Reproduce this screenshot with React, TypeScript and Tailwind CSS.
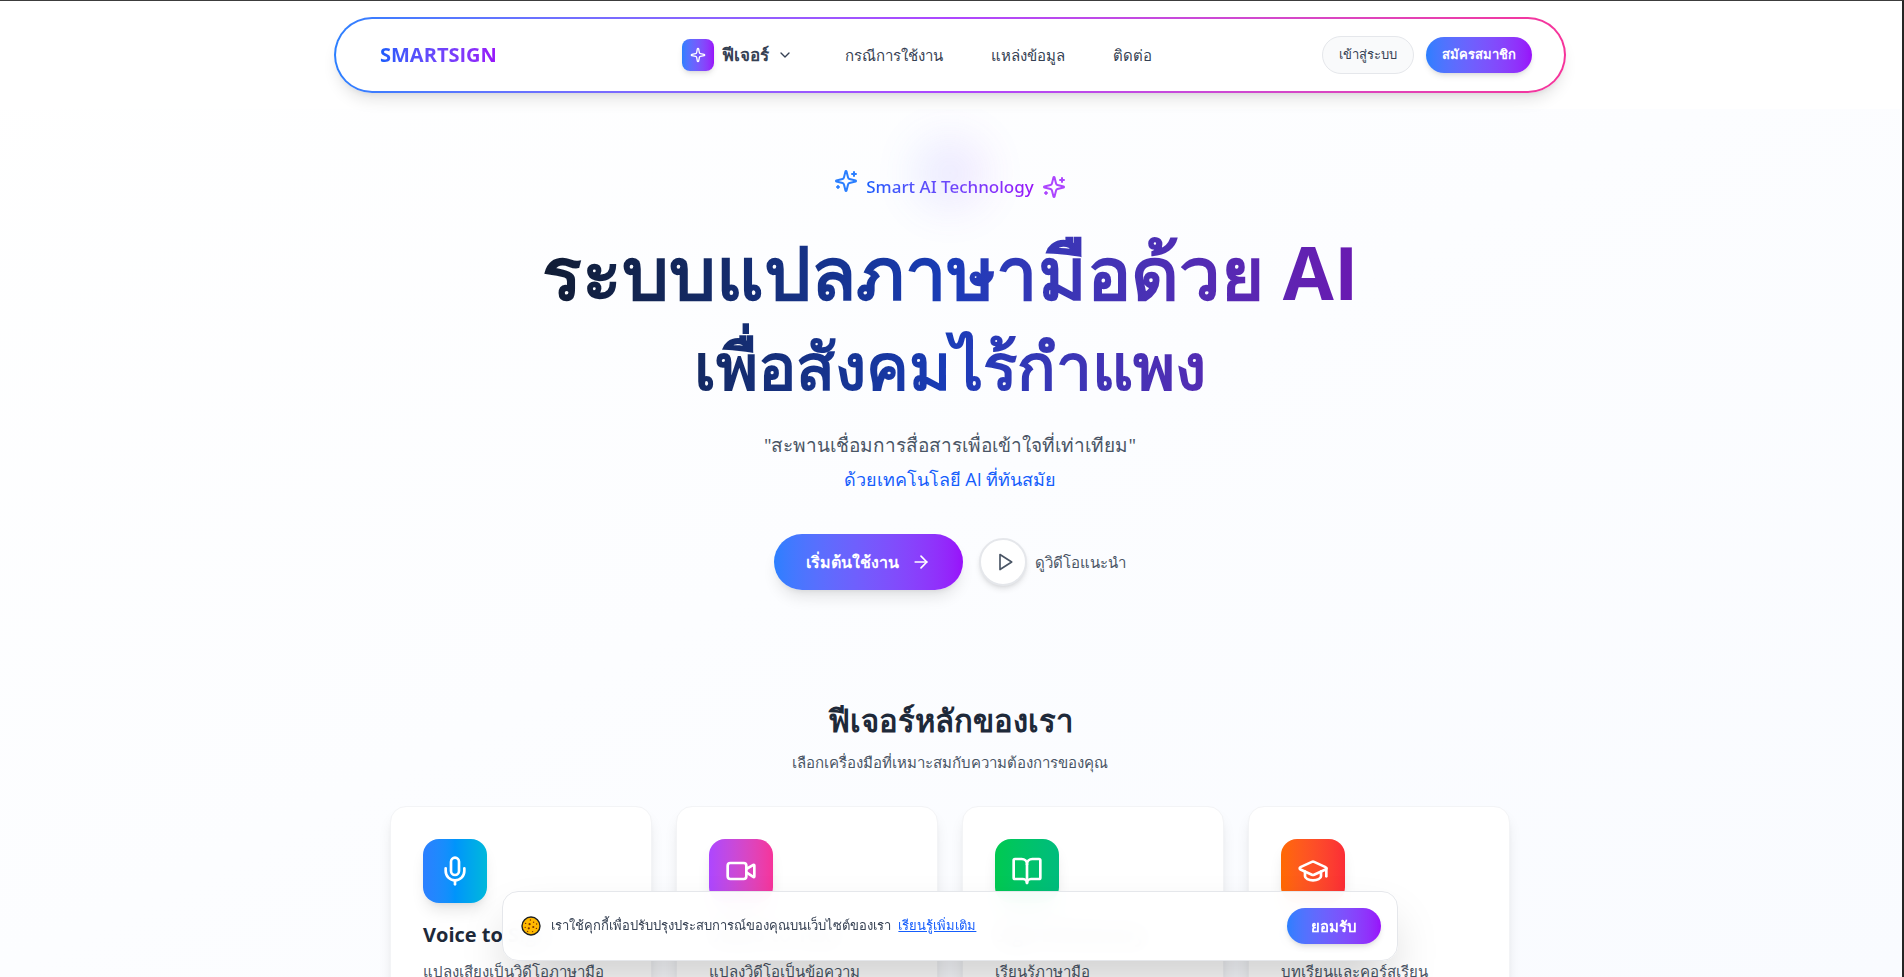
import React from 'react';
import {
  ArrowRight,
  BookOpen,
  ChevronDown,
  GraduationCap,
  Mic,
  Sparkle,
  Video,
} from 'lucide-react';

const features = [
  {
    title: 'Voice to Sign',
    description: 'แปลงเสียงเป็นวิดีโอภาษามือ',
    icon: Mic,
    color: 'from-[#2b7fff] via-[#0094fb] to-[#00b8db]',
  },
  {
    title: 'Video to Text',
    description: 'แปลงวิดีโอเป็นข้อความ',
    icon: Video,
    color: 'from-[#ad46ff] to-[#f6339a]',
  },
  {
    title: 'Sign Dictionary',
    description: 'เรียนรู้ภาษามือ',
    icon: BookOpen,
    color: 'from-[#00c950] to-[#00bc7d]',
  },
  {
    title: 'Courses',
    description: 'บทเรียนและคอร์สเรียน',
    icon: GraduationCap,
    color: 'from-[#ff6900] to-[#fb2c36]',
  },
];

const navLinks = ['กรณีการใช้งาน', 'แหล่งข้อมูล', 'ติดต่อ'];

const SparklesIcon: React.FC<{ className?: string }> = ({ className }) => (
  <svg
    className={className}
    viewBox="0 0 24 24"
    fill="none"
    stroke="currentColor"
    strokeWidth={2}
    strokeLinecap="round"
    strokeLinejoin="round"
    aria-hidden="true"
  >
    <path d="M9.937 15.5A2 2 0 0 0 8.5 14.063l-6.135-1.582a.5.5 0 0 1 0-.962L8.5 9.936A2 2 0 0 0 9.937 8.5l1.582-6.135a.5.5 0 0 1 .963 0L14.063 8.5A2 2 0 0 0 15.5 9.937l6.135 1.581a.5.5 0 0 1 0 .964L15.5 14.063a2 2 0 0 0-1.437 1.437l-1.582 6.135a.5.5 0 0 1-.963 0z" />
    <path d="M20 3v4M22 5h-4M4 17v2M5 18H3" />
  </svg>
);

const PlayIcon: React.FC<{ className?: string }> = ({ className }) => (
  <svg
    className={className}
    viewBox="0 0 24 24"
    fill="none"
    stroke="currentColor"
    strokeWidth={2}
    strokeLinecap="round"
    strokeLinejoin="round"
    aria-hidden="true"
  >
    <polygon points="6 3 20 12 6 21 6 3" />
  </svg>
);

const CookieIcon: React.FC = () => (
  <svg className="h-5 w-5 shrink-0" viewBox="0 0 20 20" fill="none" aria-hidden="true">
    <circle cx="10" cy="10" r="9" fill="#ffb900" stroke="#1e2021" strokeWidth="1.4" />
    <g fill="#7b3306">
      <circle cx="8.6" cy="8.2" r="1.1" />
      <circle cx="12.3" cy="11" r="1.1" />
      <circle cx="7.8" cy="12.3" r="1.1" />
      <circle cx="4.6" cy="7.4" r="0.7" />
      <circle cx="12.6" cy="6.2" r="0.7" />
      <circle cx="9.4" cy="4" r="0.7" />
      <circle cx="15.6" cy="8" r="0.7" />
      <circle cx="15.4" cy="12.4" r="0.7" />
      <circle cx="11.6" cy="15.6" r="0.7" />
      <circle cx="6.6" cy="15.4" r="0.7" />
      <circle cx="4.2" cy="11.4" r="0.7" />
    </g>
  </svg>
);

const Header: React.FC = () => (
  <header className="relative z-10 bg-white py-4">
    <div className="mx-auto max-w-7xl px-6">
      <div className="rounded-full bg-linear-to-r from-[#2b7fff] via-[#ad46ff] to-[#f6339a] p-[2px] shadow-lg">
        <div className="flex h-[72px] items-center justify-between rounded-full bg-white pr-8 pl-11">
          <a
            href="#home"
            className="bg-linear-to-r from-[#155dfc] to-[#9810fa] bg-clip-text text-xl font-bold text-transparent"
          >
            SMARTSIGN
          </a>
          <nav className="flex items-center gap-2 pl-4">
            <button type="button" className="flex items-center gap-2 pr-6 pl-5 text-[17px] font-semibold text-[#364153]">
              <span className="flex h-8 w-8 items-center justify-center rounded-lg bg-linear-to-r from-[#2b7fff] to-[#9810fa] text-white shadow-md">
                <Sparkle className="h-4 w-4" />
              </span>
              ฟีเจอร์
              <ChevronDown className="h-4 w-4" />
            </button>
            {navLinks.map((link) => (
              <a key={link} href="#" className="px-5 text-[15px] font-medium text-[#364153]">
                {link}
              </a>
            ))}
          </nav>
          <div className="flex items-center gap-3">
            <button
              type="button"
              className="h-[38px] rounded-full border border-gray-200 bg-gray-50 px-4 text-[13px] font-medium text-[#364153]"
            >
              เข้าสู่ระบบ
            </button>
            <button
              type="button"
              className="h-9 rounded-full bg-linear-to-r from-[#2b7fff] to-[#9810fa] px-4 text-[13px] font-semibold text-white shadow-md"
            >
              สมัครสมาชิก
            </button>
          </div>
        </div>
      </div>
    </div>
  </header>
);

const Hero: React.FC = () => (
  <section className="relative px-4 pt-15 text-center">
    <div className="absolute top-8 left-1/2 h-16 w-16 -translate-x-1/2 rounded-full bg-linear-to-r from-[#2b7fff] to-[#9810fa] opacity-15 blur-xl" />
    <div className="relative flex items-center justify-center gap-2">
      <SparklesIcon className="mb-3 h-6 w-6 text-[#2b7fff]" />
      <span className="bg-linear-to-r from-[#155dfc] to-[#9810fa] bg-clip-text font-['Noto_Sans',sans-serif] text-[17px] leading-7 font-medium text-transparent">
        Smart AI Technology
      </span>
      <SparklesIcon className="h-6 w-6 text-[#ad46ff]" />
    </div>
    <h1 className="mx-auto mt-[18px] max-w-4xl bg-linear-to-r from-[#101828] via-[#193cb8] to-[#6e11b0] bg-clip-text font-bold text-transparent">
      <span className="block text-[74px] leading-[98px]">ระบบแปลภาษามือด้วย AI</span>
      <span className="block text-[64px] leading-[90px]">เพื่อสังคมไร้กำแพง</span>
    </h1>
    <p className="mt-5 text-[19px] leading-7 text-[#4a5565]">"สะพานเชื่อมการสื่อสารเพื่อเข้าใจที่เท่าเทียม"</p>
    <p className="mt-1.5 text-lg leading-7 font-medium text-[#155dfc]">ด้วยเทคโนโลยี AI ที่ทันสมัย</p>
    <div className="mt-[41px] flex items-center justify-center gap-4">
      <button
        type="button"
        className="flex h-14 items-center gap-3 rounded-full bg-linear-to-r from-[#2b7fff] to-[#9810fa] px-8 text-base font-bold text-white shadow-lg"
      >
        เริ่มต้นใช้งาน
        <ArrowRight className="h-5 w-5" />
      </button>
      <button type="button" className="flex items-center gap-2 text-[15px] font-medium text-[#4a5565]">
        <span className="flex h-12 w-12 items-center justify-center rounded-full border-2 border-gray-200 bg-white pl-1 shadow-md">
          <PlayIcon className="h-5 w-5" />
        </span>
        ดูวิดีโอแนะนำ
      </button>
    </div>
  </section>
);

const Features: React.FC = () => (
  <section className="mx-auto max-w-6xl px-4 pt-28 pb-16">
    <h2 className="text-center text-[31px] leading-9 font-bold text-[#1e2939]">ฟีเจอร์หลักของเรา</h2>
    <p className="mt-3 text-center text-[15px] leading-6 text-[#4a5565]">เลือกเครื่องมือที่เหมาะสมกับความต้องการของคุณ</p>
    <div className="mt-8 grid grid-cols-4 gap-6">
      {features.map(({ title, description, icon: Icon, color }) => (
        <article key={title} className="rounded-2xl border border-gray-100 bg-white p-8 shadow-lg">
          <div className={`flex h-16 w-16 items-center justify-center rounded-2xl bg-linear-to-r text-white shadow-lg ${color}`}>
            <Icon className="h-8 w-8" />
          </div>
          <h3 className="mt-4 text-xl leading-8 font-bold text-[#1e2939]">{title}</h3>
          <p className="mt-2 text-[15px] leading-6 text-[#4a5565]">{description}</p>
        </article>
      ))}
    </div>
  </section>
);

const CookieBanner: React.FC = () => (
  <div className="fixed inset-x-0 bottom-4 z-20 pr-1">
    <div className="mx-auto flex h-[70px] max-w-4xl items-center gap-2.5 rounded-2xl border border-gray-200 bg-white/95 pr-4 pl-[18px] shadow-2xl backdrop-blur-md">
      <CookieIcon />
      <p className="flex-1 text-[13px] text-[#364153]">
        เราใช้คุกกี้เพื่อปรับปรุงประสบการณ์ของคุณบนเว็บไซต์ของเรา{' '}
        <a href="#" className="ml-1 text-[#155dfc] underline">
          เรียนรู้เพิ่มเติม
        </a>
      </p>
      <button
        type="button"
        className="h-9 rounded-full bg-linear-to-r from-[#2b7fff] to-[#9810fa] px-6 text-[15px] font-bold text-white shadow-md"
      >
        ยอมรับ
      </button>
    </div>
  </div>
);

const App: React.FC = () => {
  return (
    <div className="h-screen overflow-y-auto border-t border-r-2 border-t-[#3c3c3c] border-r-[#252525] bg-linear-to-br from-white via-[#fcfdff] to-[#f9fbff] pr-[2px] font-['Open_Sans','Noto_Sans',sans-serif] [scrollbar-width:none]">
      <Header />
      <main>
        <Hero />
        <Features />
      </main>
      <CookieBanner />
    </div>
  );
};

export default App;
